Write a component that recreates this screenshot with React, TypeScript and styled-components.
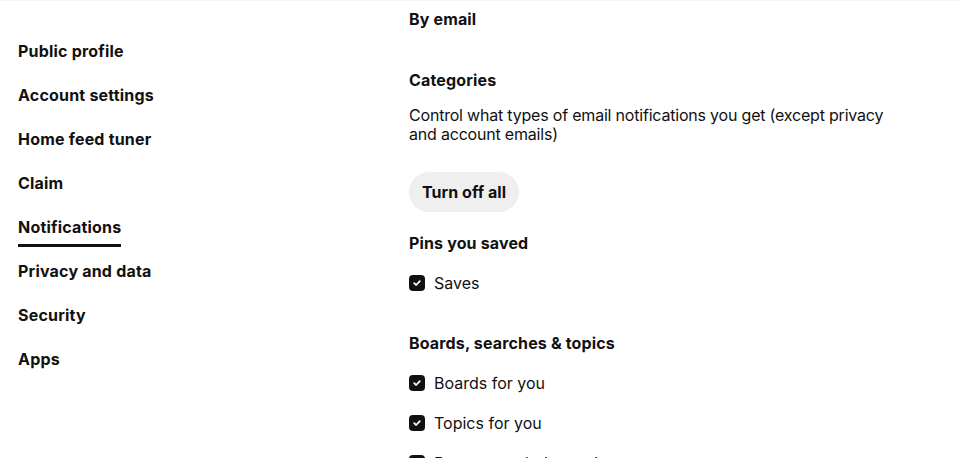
import React from "react";
import styled, { createGlobalStyle } from "styled-components";

const Global = createGlobalStyle`
  html, body { margin: 0; padding: 0; background: #fff; }
  body {
    font-family: Inter, "Noto Sans", "Liberation Sans", sans-serif;
    color: #111111;
    -webkit-font-smoothing: antialiased;
  }
`;

const Page = styled.div`
  display: flex;
  align-items: flex-start;
  width: 958px;
  height: 458px;
  overflow: hidden;
  border-top: 1px solid #f4f4f4;
  box-sizing: border-box;
`;

const Nav = styled.nav`
  display: flex;
  flex-direction: column;
  width: 391px;
  padding: 28px 0 0 18px;
  flex-shrink: 0;
`;

const NavItem = styled.a`
  display: block;
  height: 44px;
  padding-top: 12px;
  box-sizing: border-box;
  color: #111111;
  text-decoration: none;
  font-size: 16px;
  font-weight: 700;
  line-height: 20px;
  letter-spacing: 0.2px;
`;

const NavLabel = styled.span<{ $active?: boolean }>`
  display: inline-block;
  padding-bottom: 7px;
  border-bottom: 3px solid ${(p) => (p.$active ? "#111111" : "transparent")};
`;

const Content = styled.main`
  display: flex;
  flex-direction: column;
  padding-top: 8px;
  width: 490px;
`;

const Heading = styled.h3<{ $mt?: number }>`
  margin: ${(p) => p.$mt ?? 0}px 0 0;
  font-size: 16px;
  font-weight: 700;
  line-height: 20px;
  letter-spacing: 0.15px;
`;

const Desc = styled.p`
  margin: 16px 0 0;
  font-size: 16px;
  font-weight: 400;
  line-height: 19px;
  letter-spacing: -0.2px;
`;

const PillButton = styled.button`
  align-self: flex-start;
  margin-top: 28px;
  height: 40px;
  padding: 0 13px;
  border: none;
  border-radius: 20px;
  background: #efefef;
  color: #111111;
  font-family: inherit;
  font-size: 16px;
  font-weight: 700;
  letter-spacing: 0.05px;
  cursor: pointer;
`;

const CheckRow = styled.label`
  display: flex;
  align-items: center;
  gap: 9px;
  margin-top: 20px;
  height: 20px;
  font-size: 16px;
  line-height: 20px;
  color: #111111;
`;

const Box = styled.span`
  display: inline-flex;
  align-items: center;
  justify-content: center;
  width: 16px;
  height: 16px;
  border-radius: 4px;
  background: #111111;
  flex-shrink: 0;
`;

const Check = () => (
  <svg width="10" height="10" viewBox="0 0 10 10" aria-hidden>
    <path d="M2.2 5.2 L4.2 7 L7.8 3.2" fill="none" stroke="#fff" strokeWidth="1.8" strokeLinecap="round" strokeLinejoin="round" />
  </svg>
);

const Checkbox = ({ label }: { label: string }) => (
  <CheckRow>
    <Box>
      <Check />
    </Box>
    {label}
  </CheckRow>
);

const navItems = [
  "Public profile",
  "Account settings",
  "Home feed tuner",
  "Claim",
  "Notifications",
  "Privacy and data",
  "Security",
  "Apps",
];

export default function App() {
  return (
    <>
      <Global />
      <Page>
        <Nav>
          {navItems.map((n) => (
            <NavItem key={n} href="#">
              <NavLabel $active={n === "Notifications"}>{n}</NavLabel>
            </NavItem>
          ))}
        </Nav>
        <Content>
          <Heading>By email</Heading>
          <Heading $mt={41}>Categories</Heading>
          <Desc>
            Control what types of email notifications you get (except privacy and account emails)
          </Desc>
          <PillButton>Turn off all</PillButton>
          <Heading $mt={21}>Pins you saved</Heading>
          <Checkbox label="Saves" />
          <Heading $mt={40}>Boards, searches &amp; topics</Heading>
          <Checkbox label="Boards for you" />
          <Checkbox label="Topics for you" />
          <Checkbox label="Recommended searches" />
        </Content>
      </Page>
    </>
  );
}
